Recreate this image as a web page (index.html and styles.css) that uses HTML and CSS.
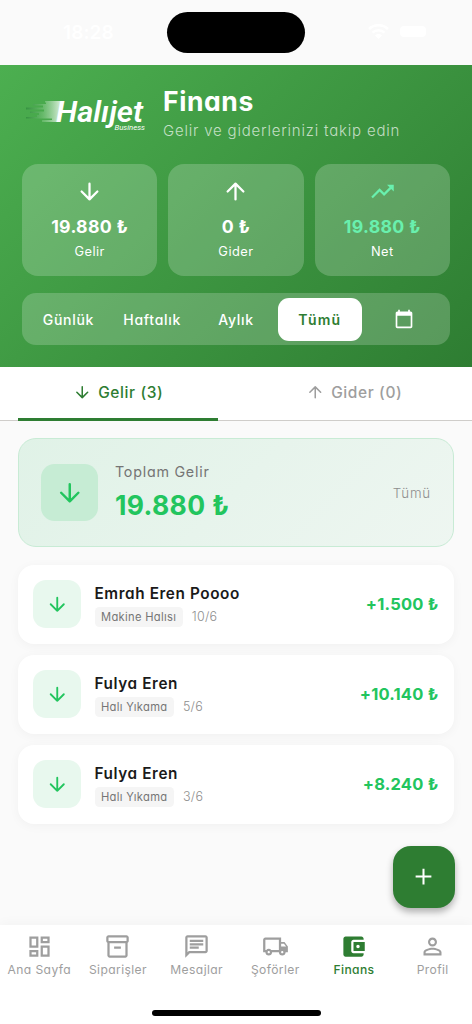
FILE: index.html
```html
<!DOCTYPE html>
<html lang="tr">
<head>
<meta charset="utf-8">
<title>Halıjet Business – Finans</title>
<link rel="stylesheet" href="styles.css">
</head>
<body>
<svg class="defs" aria-hidden="true">
  <symbol id="down" viewBox="0 0 24 24"><path d="M12 5v14M5 12l7 7 7-7" fill="none" stroke="currentColor" stroke-width="2" stroke-linecap="round" stroke-linejoin="round"/></symbol>
  <symbol id="up" viewBox="0 0 24 24"><path d="M12 19V5M5 12l7-7 7 7" fill="none" stroke="currentColor" stroke-width="2" stroke-linecap="round" stroke-linejoin="round"/></symbol>
</svg>

<div class="status">
  <span class="clock">18:28</span>
  <span class="island"></span>
  <span class="signals">
    <svg width="21" height="15" viewBox="0 0 21 15"><path d="M1 5a14 14 0 0 1 19 0M4.500 8.600a9 9 0 0 1 12 0" fill="none" stroke="#fff" stroke-width="2.600"/><path d="M7 11.500a5 5 0 0 1 7 0L10.500 15z" fill="#fff"/></svg>
    <span class="battery"></span>
  </span>
</div>

<header class="header">
  <div class="brand">
    <svg class="logo" width="124" height="42" viewBox="0 0 124 42" role="img" aria-label="Halıjet Business">
      <defs>
        <linearGradient id="speed" x1="0" x2="1"><stop offset="0" stop-color="#237a35" stop-opacity=".5"/><stop offset=".45" stop-color="#81c784" stop-opacity=".5"/><stop offset="1" stop-color="#fff" stop-opacity=".85"/></linearGradient>
      </defs>
      <path fill="url(#speed)" d="M23 10h17l-5 21H20v-2h10v-1.500H4V26h11v-2H17v-2H8v-1.500h14v-2H4V16.500h17v-2h-10V13h13v-1.500h-1z"/>
      <text class="logo-name" x="34" y="30.800" textLength="87" lengthAdjust="spacingAndGlyphs">Halıjet</text>
      <text class="logo-sub" x="92.500" y="39" textLength="30.500" lengthAdjust="spacingAndGlyphs">Business</text>
    </svg>
    <div class="titles">
      <h1 class="title">Finans</h1>
      <p class="subtitle">Gelir ve giderlerinizi takip edin</p>
    </div>
  </div>
  <div class="stats">
    <div class="stat"><svg class="i27"><use href="#down"/></svg><b class="stat-value">19.880 ₺</b><span class="stat-label">Gelir</span></div>
    <div class="stat"><svg class="i27"><use href="#up"/></svg><b class="stat-value">0 ₺</b><span class="stat-label">Gider</span></div>
    <div class="stat"><svg class="i27 mint" viewBox="0 0 24 24"><path d="M16 6l2.290 2.290-4.880 4.880-4-4L2 16.590 3.410 18l6-6 4 4 6.300-6.290L22 12V6z"/></svg><b class="stat-value mint">19.880 ₺</b><span class="stat-label">Net</span></div>
  </div>
  <div class="periods">
    <span class="period">Günlük</span>
    <span class="period">Haftalık</span>
    <span class="period">Aylık</span>
    <span class="period selected">Tümü</span>
    <span class="period"><svg class="i20" viewBox="0 0 24 24"><path d="M20 3h-1V1h-2v2H7V1H5v2H4c-1.100 0-2 .9-2 2v16c0 1.100.9 2 2 2h16c1.100 0 2-.9 2-2V5c0-1.100-.9-2-2-2zm0 18H4V8h16v13z"/></svg></span>
  </div>
</header>

<div class="tabs">
  <div class="tab active"><svg class="i18"><use href="#down"/></svg><span>Gelir (3)</span></div>
  <div class="tab"><svg class="i18"><use href="#up"/></svg><span>Gider (0)</span></div>
</div>

<main class="content">
  <section class="summary">
    <span class="summary-icon"><svg class="i29"><use href="#down"/></svg></span>
    <div class="summary-text"><span class="summary-label">Toplam Gelir</span><b class="summary-value">19.880 ₺</b></div>
    <span class="summary-period">Tümü</span>
  </section>
  <article class="entry">
    <span class="entry-icon"><svg class="i22"><use href="#down"/></svg></span>
    <div class="entry-text"><b class="name">Emrah Eren Poooo</b><div class="meta"><span class="chip">Makine Halısı</span><span class="date">10/6</span></div></div>
    <b class="amount">+1.500 ₺</b>
  </article>
  <article class="entry">
    <span class="entry-icon"><svg class="i22"><use href="#down"/></svg></span>
    <div class="entry-text"><b class="name">Fulya Eren</b><div class="meta"><span class="chip">Halı Yıkama</span><span class="date">5/6</span></div></div>
    <b class="amount">+10.140 ₺</b>
  </article>
  <article class="entry">
    <span class="entry-icon"><svg class="i22"><use href="#down"/></svg></span>
    <div class="entry-text"><b class="name">Fulya Eren</b><div class="meta"><span class="chip">Halı Yıkama</span><span class="date">3/6</span></div></div>
    <b class="amount">+8.240 ₺</b>
  </article>
  <button class="fab" aria-label="Ekle"><svg class="i27" viewBox="0 0 24 24"><path d="M19 12.900h-6.100V19h-1.800v-6.100H5v-1.800h6.100V5h1.800v6.100H19z"/></svg></button>
</main>

<nav class="nav">
  <div class="nav-items">
    <div class="nav-item"><svg class="i27" viewBox="0 0 24 24"><path d="M19 5v2h-4V5h4M9 5v6H5V5h4m10 8v6h-4v-6h4M9 17v2H5v-2h4M21 3h-8v6h8V3zM11 3H3v10h8V3zm10 8h-8v10h8V11zm-10 4H3v6h8v-6z"/></svg><span>Ana Sayfa</span></div>
    <div class="nav-item"><svg class="i27" viewBox="0 0 24 24"><path d="M20 2H4c-1 0-2 .9-2 2v3.010c0 .72.43 1.340 1 1.690V20c0 1.100 1.100 2 2 2h14c.9 0 2-.9 2-2V8.700c.57-.35 1-.97 1-1.690V4c0-1.100-1-2-2-2zm-1 18H5V9h14v11zm1-13H4V4h16v3zM9 12h6v2H9z"/></svg><span>Siparişler</span></div>
    <div class="nav-item"><svg class="i27" viewBox="0 0 24 24"><path d="M4 4h16v12H5.170L4 17.170V4m0-2c-1.100 0-1.990.9-1.990 2L2 22l4-4h14c1.100 0 2-.9 2-2V4c0-1.100-.9-2-2-2H4zm2 10h8v2H6v-2zm0-3h12v2H6V9zm0-3h12v2H6V6z"/></svg><span>Mesajlar</span></div>
    <div class="nav-item"><svg class="i27" viewBox="0 0 24 24"><path d="M20 8h-3V4H3c-1.100 0-2 .9-2 2v11h2c0 1.660 1.340 3 3 3s3-1.340 3-3h6c0 1.660 1.340 3 3 3s3-1.340 3-3h2v-5l-3-4zm-.5 1.500l1.960 2.500H17V9.500h2.500zM6 18c-.55 0-1-.45-1-1s.45-1 1-1 1 .45 1 1-.45 1-1 1zm2.220-3c-.55-.61-1.330-1-2.220-1s-1.670.39-2.220 1H3V6h12v9H8.220zM18 18c-.55 0-1-.45-1-1s.45-1 1-1 1 .45 1 1-.45 1-1 1z"/></svg><span>Şoförler</span></div>
    <div class="nav-item current"><svg class="i27" viewBox="0 0 24 24"><path d="M21 18v1c0 1.100-.9 2-2 2H5c-1.110 0-2-.9-2-2V5c0-1.100.89-2 2-2h14c1.100 0 2 .9 2 2v1h-9c-1.110 0-2 .9-2 2v8c0 1.100.89 2 2 2h9zm-9-2h10V8H12v8zm4-2.500c-.83 0-1.500-.67-1.500-1.500s.67-1.500 1.500-1.500 1.500.67 1.500 1.500-.67 1.500-1.500 1.500z"/></svg><span>Finans</span></div>
    <div class="nav-item"><svg class="i27" viewBox="0 0 24 24"><path d="M12 5.900c1.160 0 2.100.94 2.100 2.100s-.94 2.100-2.100 2.100S9.900 9.160 9.900 8s.94-2.100 2.100-2.100m0 9c2.970 0 6.100 1.460 6.100 2.100v1.100H5.900V17c0-.64 3.130-2.100 6.100-2.100M12 4C9.790 4 8 5.790 8 8s1.790 4 4 4 4-1.790 4-4-1.790-4-4-4zm0 9c-2.670 0-8 1.340-8 4v3h16v-3c0-2.660-5.330-4-8-4z"/></svg><span>Profil</span></div>
  </div>
  <span class="home-bar"></span>
</nav>
</body>
</html>
```
FILE: styles.css
```css
* { box-sizing: border-box; }
body {
  position: relative;
  display: flex;
  flex-direction: column;
  width: 472px;
  height: 1024px;
  margin: 0;
  overflow: hidden;
  background: #fafafa;
  font-family: Inter, "Open Sans", sans-serif;
  font-feature-settings: "cv11" 1;
  color: #1a1a1a;
}
svg { display: block; flex: none; fill: currentColor; }
.defs { position: absolute; width: 0; height: 0; }
.i18 { width: 18.5px; height: 18.5px; }
.i20 { width: 20px; height: 20px; }
.i22 { width: 22.5px; height: 22.5px; }
.i27 { width: 27px; height: 27px; }
.i29 { width: 29.5px; height: 29.5px; }

.status {
  flex: none;
  height: 65px;
  display: grid;
  grid-template-columns: 167px 138px 167px;
  align-items: center;
}
.clock { padding-left: 63px; font-size: 19px; font-weight: 600; letter-spacing: .1px; color: #fff; }
.island { height: 41px; border-radius: 21px; background: #000; }
.signals { display: flex; align-items: center; gap: 11px; padding-left: 63px; padding-bottom: 2px; }
.battery { width: 26px; height: 11px; border-radius: 4px; background: #fff; }

.header {
  flex: none;
  height: 302px;
  padding: 22px 22px 0;
  background: linear-gradient(135deg, #4caf50 0%, #2e7d32 100%);
  color: #fff;
}
.brand { display: flex; gap: 17px; height: 77px; }
.logo { margin-top: 4px; }
.logo-name { font: italic 600 28.5px Roboto, sans-serif; fill: #fff; }
.logo-sub { font: italic 400 7.5px Roboto, sans-serif; fill: #fff; }
.title { margin: -4px 0 0; font-size: 26.5px; line-height: 36px; font-weight: 750; letter-spacing: .6px; }
.subtitle { margin: 1px 0 0; font-size: 15px; line-height: 22px; letter-spacing: .8px; color: rgba(255,255,255,.7); font-weight: 300; }
.stats { display: grid; grid-template-columns: repeat(3, 1fr); gap: 11px; }
.stat {
  height: 112px;
  padding-top: 14px;
  display: flex;
  flex-direction: column;
  align-items: center;
  border-radius: 16px;
  background: rgba(255,255,255,.2);
}
.stat-value { margin-top: 9px; font-size: 17.7px; line-height: 26px; font-weight: 700; letter-spacing: .3px; }
.stat-label { font-size: 12.8px; line-height: 24px; letter-spacing: .5px; }
.mint { color: #69f0ae; }
.periods {
  margin-top: 17px;
  height: 52px;
  padding: 4.5px;
  display: grid;
  grid-template-columns: repeat(5, 1fr);
  border-radius: 14px;
  background: rgba(255,255,255,.2);
}
.period { display: flex; align-items: center; justify-content: center; border-radius: 11px; font-size: 14px; font-weight: 500; letter-spacing: .7px; }
.selected { background: #fff; color: #2e7d32; font-weight: 600; letter-spacing: 1.2px; }

.tabs {
  flex: none;
  height: 54px;
  display: grid;
  grid-template-columns: 1fr 1fr;
  padding: 0 18px;
  column-gap: 36px;
  background: #fff;
  border-bottom: 1px solid #cfcdca;
}
.tab { display: flex; align-items: center; justify-content: center; gap: 7px; height: 54px; padding-bottom: 1px; border-bottom: 3px solid transparent; font-size: 15.5px; font-weight: 450; letter-spacing: .6px; color: #9e9e9e; }
.tab.active { color: #2e7d32; background: linear-gradient(#2e7d32, #2e7d32) bottom / 100% 3px no-repeat border-box; border-radius: 3px 3px 0 0; }

.content { position: relative; flex: 1; padding: 17px 18px 0; }
.summary {
  display: flex;
  align-items: center;
  height: 109px;
  margin-bottom: 18px;
  padding: 0 22px;
  border: 1px solid #c8ebd5;
  border-radius: 18px;
  background: linear-gradient(135deg, #e0f2e7, #eef6f1);
}
.summary-icon { display: grid; place-items: center; width: 57px; height: 57px; border-radius: 13.5px; background: #c6ecd4; color: #22c55e; }
.summary-text { flex: 1; display: flex; flex-direction: column; margin-left: 17px; }
.summary-label { font-size: 14.3px; line-height: 24px; letter-spacing: .75px; color: #757575; }
.summary-value { font-size: 26.5px; line-height: 42px; font-weight: 700; letter-spacing: .35px; color: #22c55e; }
.summary-period { font-size: 13.3px; font-weight: 300; letter-spacing: .8px; color: #8e8e8e; }
.entry {
  display: flex;
  align-items: center;
  height: 79px;
  margin-bottom: 11px;
  padding: 0 15.5px 1px 15px;
  border-radius: 16px;
  background: #fff;
  box-shadow: 0 2px 11px rgba(0,0,0,.04);
}
.entry-icon { display: grid; place-items: center; width: 48px; height: 48px; border-radius: 13px; background: #e8f8ee; color: #22c55e; }
.entry-text { flex: 1; margin-left: 13.5px; }
.name { display: block; font-size: 15.3px; line-height: 24px; font-weight: 600; letter-spacing: .6px; }
.meta { display: flex; align-items: center; gap: 9px; margin-top: 1px; }
.chip { height: 20px; padding: 0 6.5px; border-radius: 4.5px; background: #f5f5f5; font-size: 11.2px; line-height: 20px; letter-spacing: .3px; color: #757575; }
.date { font-size: 12.5px; line-height: 20px; font-weight: 300; letter-spacing: .3px; color: #8e8e8e; }
.amount { font-size: 16.5px; font-weight: 700; letter-spacing: .2px; color: #22c55e; }
.fab {
  position: absolute;
  right: 17.5px;
  bottom: 17.5px;
  display: grid;
  place-items: center;
  width: 61.5px;
  height: 61.5px;
  padding: 0;
  border: 0;
  border-radius: 18px;
  background: #2e7d32;
  color: #fff;
  box-shadow: 0 4px 7px rgba(0,0,0,.3);
}
.nav { flex: none; display: flex; flex-direction: column; align-items: center; justify-content: space-between; height: 99px; padding: 8px 0 8.5px; background: #fff; box-shadow: 0 -2px 11px rgba(0,0,0,.03); }
.nav-items { display: grid; grid-template-columns: repeat(6, 1fr); width: 100%; }
.nav-item { display: flex; flex-direction: column; align-items: center; font-size: 12.1px; line-height: 19px; letter-spacing: .4px; white-space: nowrap; color: #9e9e9e; }
.current { color: #2e7d32; font-weight: 500; }
.home-bar { width: 169px; height: 6px; border-radius: 3px; background: #000; }
```
